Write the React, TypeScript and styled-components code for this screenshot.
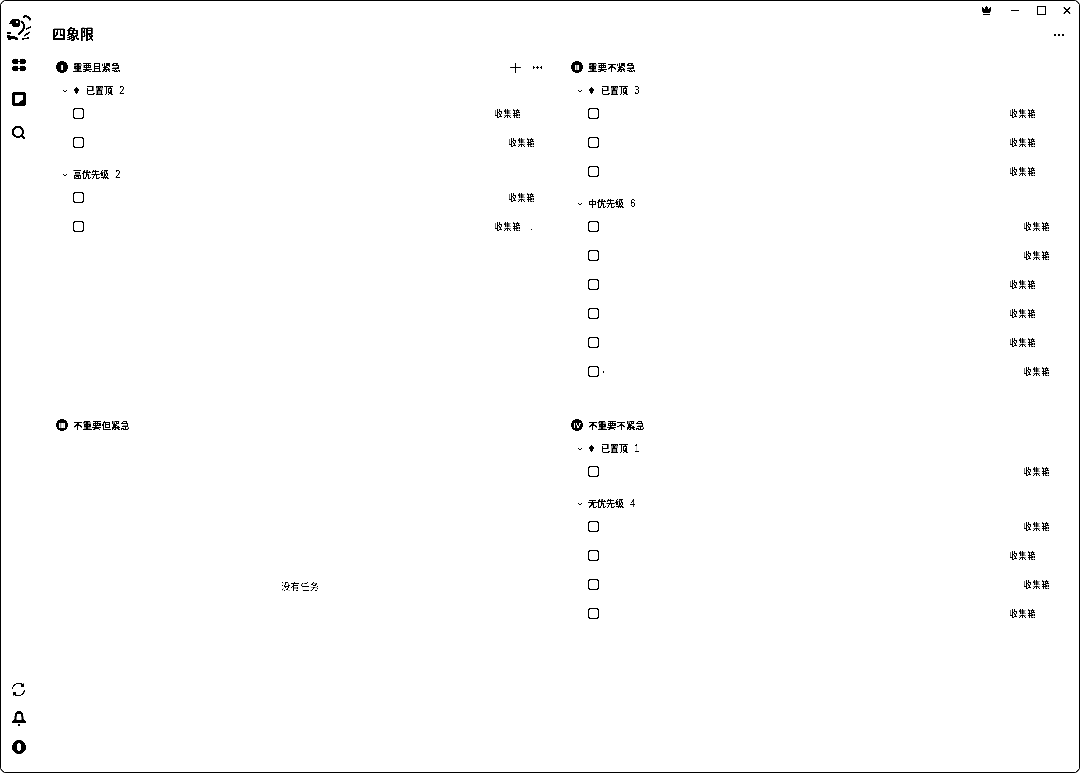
import styled, { createGlobalStyle } from 'styled-components';
import { ChevronDown, Crown, Minus, MoreHorizontal, Plus, Search, Square, X } from 'lucide-react';

const GlobalStyle = createGlobalStyle`
  html, body {
    margin: 0;
    padding: 0;
    background: #fff;
  }
  * {
    box-sizing: border-box;
  }
`;

const Window = styled.div`
  display: flex;
  width: 1080px;
  height: 773px;
  overflow: hidden;
  background: #fff;
  color: #000;
  border: 1px solid #000;
  border-radius: 6px;
  font-family: 'Noto Sans CJK SC', 'Noto Sans', sans-serif;
  filter: grayscale(1) contrast(12);
`;

const Sidebar = styled.nav`
  display: flex;
  flex-direction: column;
  align-items: center;
  flex: 0 0 35px;
  padding: 15px 0 16px;
`;

const NavGroup = styled.div`
  display: flex;
  flex-direction: column;
  align-items: center;
  gap: 15px;
`;

const BottomGroup = styled(NavGroup)`
  margin-top: auto;
  gap: 9.5px;
`;

const NavSlot = styled.div`
  display: flex;
  align-items: center;
  justify-content: center;
  width: 26px;
  height: 19px;
`;

const LogoSlot = styled(NavSlot)`
  height: 24px;
`;

const Main = styled.main`
  display: flex;
  flex-direction: column;
  flex: 1;
  min-width: 0;
`;

const WindowBar = styled.div`
  display: flex;
  justify-content: flex-end;
  align-items: center;
  gap: 14px;
  height: 18px;
  padding-right: 6px;
`;

const BarButton = styled.span`
  display: flex;
  align-items: center;
  justify-content: center;
  width: 12px;
  height: 12px;
`;

const CrownButton = styled(BarButton)`
  margin-right: 3px;
`;

const TitleRow = styled.header`
  display: flex;
  align-items: center;
  justify-content: space-between;
  height: 34px;
  padding: 0 13px 6px 16px;
`;

const Title = styled.h1`
  margin: 0;
  font-size: 14px;
  font-weight: 700;
  line-height: 24px;
`;

const PageMore = styled(MoreHorizontal)`
  margin-top: 4px;
`;

const Grid = styled.div`
  display: grid;
  grid-template-columns: 515px 515px;
  grid-template-rows: 358px 358px;
  padding-left: 14px;
`;

const Quadrant = styled.section`
  display: flex;
  flex-direction: column;
  padding-right: 15px;
`;

const QuadrantHead = styled.div`
  display: flex;
  align-items: center;
  gap: 5px;
  flex: 0 0 28px;
  padding: 0 6px;
  font-size: 9.5px;
  font-weight: 700;
`;

const Numeral = styled.span`
  display: flex;
  align-items: center;
  justify-content: center;
  width: 12px;
  height: 12px;
  border-radius: 50%;
  background: #000;
  color: #fff;
  font-family: 'Liberation Sans', sans-serif;
  font-size: 8px;
  font-weight: 700;
`;

const HeadActions = styled.div`
  display: flex;
  align-items: center;
  gap: 8px;
  margin-left: auto;
`;

const GroupHead = styled.div<{ $spaced?: boolean }>`
  display: flex;
  align-items: center;
  height: 18px;
  margin-top: ${({ $spaced }) => ($spaced ? '8px' : '0')};
  padding: 1px 0 0 11px;
  font-size: 9px;
  font-weight: 700;
  line-height: 18px;
`;

const Chevron = styled(ChevronDown)`
  margin-right: 4px;
`;

const Pin = styled.svg`
  margin-right: 6px;
`;

const Count = styled.span`
  margin-left: 6px;
  font-family: 'Liberation Sans', sans-serif;
  font-size: 10px;
  font-weight: 400;
`;

const Row = styled.div`
  display: flex;
  align-items: center;
  height: 29px;
  padding-left: 23px;
`;

const Checkbox = styled.span`
  flex: 0 0 11px;
  width: 11px;
  height: 11px;
  border: 1.3px solid #000;
  border-radius: 2.5px;
`;

const Mark = styled.span`
  font-size: 9px;
`;

const Project = styled.span<{ $inset: number }>`
  margin-left: auto;
  margin-right: ${({ $inset }) => $inset}px;
  font-size: 9px;
  line-height: 14px;
`;

const ProjectWrap = styled.span`
  position: relative;
`;

const Trailing = styled.span`
  position: absolute;
  right: -12px;
  top: 0;
`;

const Empty = styled.div`
  display: flex;
  flex: 1;
  align-items: center;
  justify-content: center;
  padding-bottom: 36px;
  font-size: 9.5px;
`;

const Logo = () => (
  <svg width="26" height="26" viewBox="0 0 26 26" fill="none" stroke="#000">
    <path d="M17 2.5 C20 0 24 2 24 5.5" strokeWidth="2" />
    <path d="M7 4 L4 9" strokeWidth="2" />
    <circle cx="10" cy="8" r="4.5" fill="#000" stroke="none" />
    <circle cx="11" cy="7" r="1.2" fill="#fff" stroke="none" />
    <path d="M15 6 C19 9 19 14 15 17 L12 20" strokeWidth="2" />
    <path d="M1 18 L5 18 M1 21 L12 24 M2 24 L9 22" strokeWidth="2.4" />
    <path d="M20 14 L25 12 M18 21 L24 17 M16 24 L23 23" strokeWidth="1.6" />
  </svg>
);

const Blobs = () => (
  <svg width="14" height="14" viewBox="0 0 14 14" fill="#000">
    <ellipse cx="3.4" cy="3.5" rx="3.2" ry="3" />
    <ellipse cx="10.6" cy="3.5" rx="3.2" ry="3" />
    <ellipse cx="3.4" cy="10.5" rx="3.2" ry="3" />
    <ellipse cx="10.6" cy="10.5" rx="3.2" ry="3" />
  </svg>
);

const Inbox = () => (
  <svg width="14" height="14" viewBox="0 0 14 14">
    <rect width="14" height="14" rx="2.5" fill="#000" />
    <path d="M3 4 Q3 3 4 3 H10.5 Q11 3 11 4 V8 L8 9 L7 11 H4 Q3 11 3 10 Z" fill="#fff" />
  </svg>
);

const Account = () => (
  <svg width="14" height="14" viewBox="0 0 14 14">
    <circle cx="7" cy="7" r="7" fill="#000" />
    <ellipse cx="7" cy="7" rx="2.2" ry="4.2" fill="#fff" />
  </svg>
);

const Sync = () => (
  <svg width="15" height="15" viewBox="0 0 15 15" fill="none" stroke="#000" strokeWidth="1.3">
    <path d="M1.5 7 A6 6 0 0 1 12 3.5" />
    <path d="M13.5 8 A6 6 0 0 1 3 11.5" />
    <path d="M12.5 1.5 V4 H10" />
    <path d="M2.5 13.5 V11 H5" />
  </svg>
);

const BellIcon = () => (
  <svg width="14" height="15" viewBox="0 0 14 15">
    <path
      fillRule="evenodd"
      d="M7 0 C10 0 11.5 2.5 11.5 5.5 V8 L14 11 V12 H0 V11 L2.5 8 V5.5 C2.5 2.5 4 0 7 0 Z M7 2.5 C5.5 2.5 4.5 4 4.5 5.5 V9 H9.5 V5.5 C9.5 4 8.5 2.5 7 2.5 Z"
      fill="#000"
    />
    <rect x="6" y="13" width="2" height="2" fill="#000" />
  </svg>
);

const PinIcon = () => (
  <Pin width="7" height="7" viewBox="0 0 7 7" fill="#000">
    <path d="M3.5 0 L7 3.5 L4.6 3.8 L4.6 6.8 L2.4 6.8 L2.4 3.8 L0 3.5 Z" />
  </Pin>
);

type Task = { inset: number; mark?: string; trailing?: string };
type Group = { name: string; pinned?: boolean; tasks: Task[] };

const narrow = 29;
const wide = 15;

const quadrants: { numeral: string; name: string; actions?: boolean; groups: Group[] }[] = [
  {
    numeral: 'I',
    name: '重要且紧急',
    actions: true,
    groups: [
      { name: '已置顶', pinned: true, tasks: [{ inset: narrow }, { inset: wide }] },
      { name: '高优先级', tasks: [{ inset: wide }, { inset: narrow, trailing: '.' }] },
    ],
  },
  {
    numeral: 'II',
    name: '重要不紧急',
    groups: [
      { name: '已置顶', pinned: true, tasks: [{ inset: narrow }, { inset: narrow }, { inset: narrow }] },
      {
        name: '中优先级',
        tasks: [
          { inset: wide },
          { inset: wide },
          { inset: narrow },
          { inset: narrow },
          { inset: narrow },
          { inset: wide, mark: '·' },
        ],
      },
    ],
  },
  { numeral: 'III', name: '不重要但紧急', groups: [] },
  {
    numeral: 'IV',
    name: '不重要不紧急',
    groups: [
      { name: '已置顶', pinned: true, tasks: [{ inset: wide }] },
      { name: '无优先级', tasks: [{ inset: wide }, { inset: narrow }, { inset: wide }, { inset: narrow }] },
    ],
  },
];

export default function App() {
  return (
    <>
      <GlobalStyle />
      <Window>
        <Sidebar>
          <NavGroup>
            <LogoSlot>
              <Logo />
            </LogoSlot>
            <NavSlot>
              <Blobs />
            </NavSlot>
            <NavSlot>
              <Inbox />
            </NavSlot>
            <NavSlot>
              <Search size={15} strokeWidth={3.6} />
            </NavSlot>
          </NavGroup>
          <BottomGroup>
            <NavSlot>
              <Sync />
            </NavSlot>
            <NavSlot>
              <BellIcon />
            </NavSlot>
            <NavSlot>
              <Account />
            </NavSlot>
          </BottomGroup>
        </Sidebar>
        <Main>
          <WindowBar>
            <CrownButton>
              <Crown size={11} fill="#000" strokeWidth={2} />
            </CrownButton>
            <BarButton>
              <Minus size={13} strokeWidth={2} />
            </BarButton>
            <BarButton>
              <Square size={11} strokeWidth={2.4} />
            </BarButton>
            <BarButton>
              <X size={13} strokeWidth={2.2} />
            </BarButton>
          </WindowBar>
          <TitleRow>
            <Title>四象限</Title>
            <PageMore size={14} strokeWidth={2.4} />
          </TitleRow>
          <Grid>
            {quadrants.map((q) => (
              <Quadrant key={q.numeral}>
                <QuadrantHead>
                  <Numeral>{q.numeral}</Numeral>
                  {q.name}
                  {q.actions && (
                    <HeadActions>
                      <Plus size={15} strokeWidth={2.4} />
                      <MoreHorizontal size={13} strokeWidth={2.4} />
                    </HeadActions>
                  )}
                </QuadrantHead>
                {q.groups.length === 0 && <Empty>没有任务</Empty>}
                {q.groups.map((g, i) => (
                  <div key={g.name}>
                    <GroupHead $spaced={i > 0}>
                      <Chevron size={8} strokeWidth={3} />
                      {g.pinned && <PinIcon />}
                      {g.name}
                      <Count>{g.tasks.length}</Count>
                    </GroupHead>
                    {g.tasks.map((t, j) => (
                      <Row key={j}>
                        <Checkbox />
                        {t.mark && <Mark>{t.mark}</Mark>}
                        <Project $inset={t.inset}>
                          <ProjectWrap>
                            收集箱
                            {t.trailing && <Trailing>{t.trailing}</Trailing>}
                          </ProjectWrap>
                        </Project>
                      </Row>
                    ))}
                  </div>
                ))}
              </Quadrant>
            ))}
          </Grid>
        </Main>
      </Window>
    </>
  );
}
